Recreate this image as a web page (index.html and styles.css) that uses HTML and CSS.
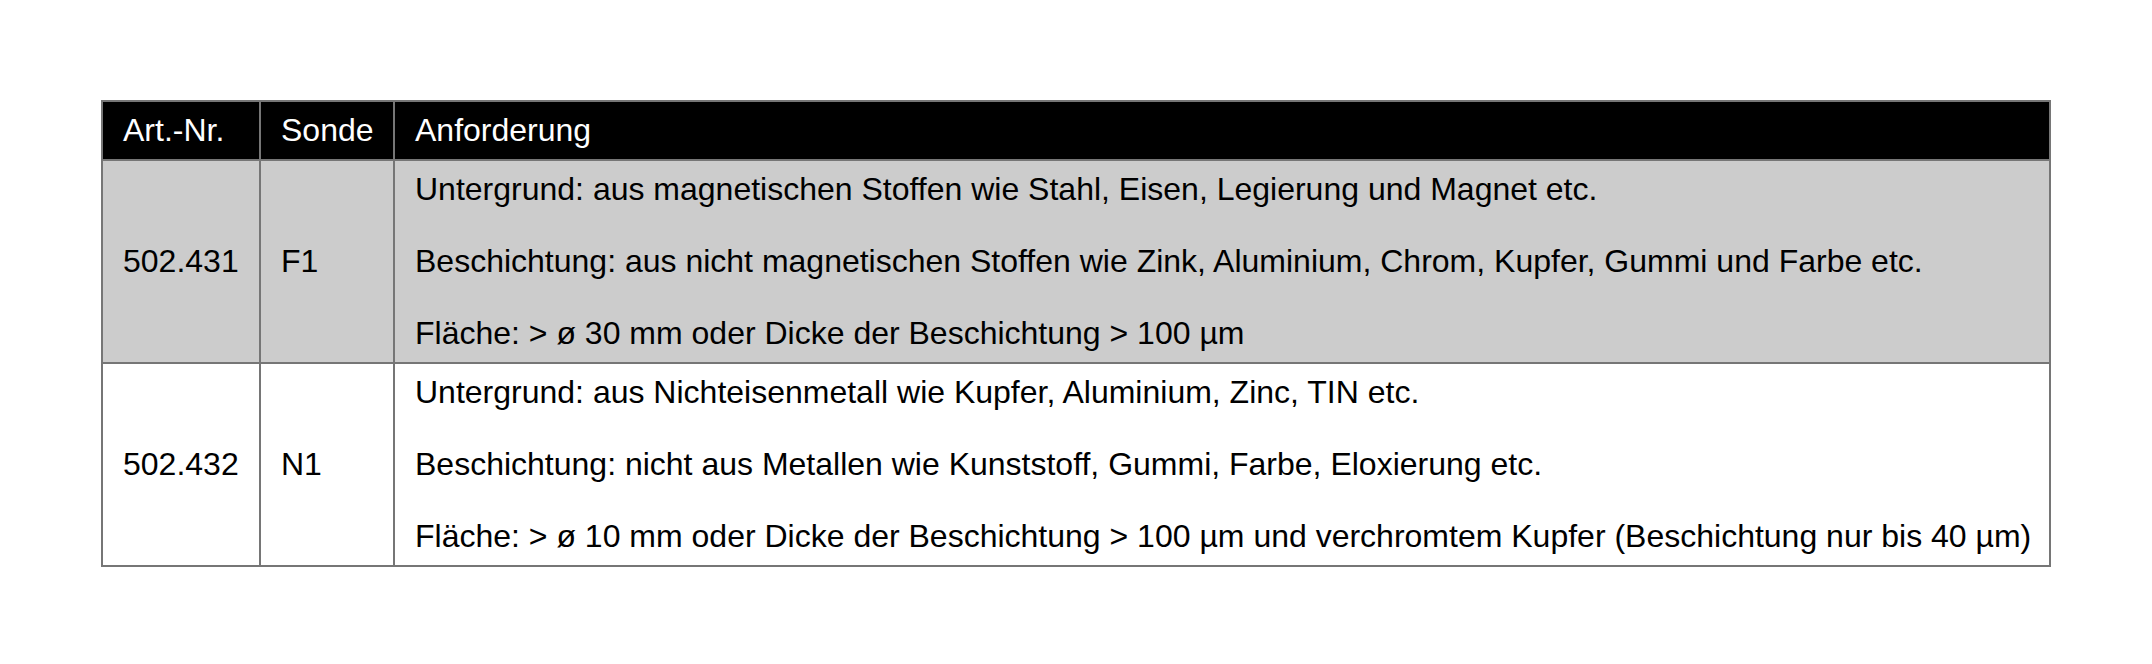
FILE: index.html
```html
<!DOCTYPE html>
<html lang="de">
<head>
<meta charset="utf-8">
<title>Sonden</title>
<link rel="stylesheet" href="styles.css">
</head>
<body>
<div class="page">
  <table class="spec">
    <colgroup>
      <col class="c-art">
      <col class="c-sonde">
      <col class="c-req">
    </colgroup>
    <thead>
      <tr>
        <th>Art.-Nr.</th>
        <th>Sonde</th>
        <th>Anforderung</th>
      </tr>
    </thead>
    <tbody>
      <tr class="shaded">
        <td>502.431</td>
        <td>F1</td>
        <td class="req">
          <p>Untergrund: aus magnetischen Stoffen wie Stahl, Eisen, Legierung und Magnet etc.</p>
          <p>Beschichtung: aus nicht magnetischen Stoffen wie Zink, Aluminium, Chrom, Kupfer, Gummi und Farbe etc.</p>
          <p>Fläche: &gt; ø 30 mm oder Dicke der Beschichtung &gt; 100 µm</p>
        </td>
      </tr>
      <tr>
        <td>502.432</td>
        <td>N1</td>
        <td class="req">
          <p>Untergrund: aus Nichteisenmetall wie Kupfer, Aluminium, Zinc, TIN etc.</p>
          <p>Beschichtung: nicht aus Metallen wie Kunststoff, Gummi, Farbe, Eloxierung etc.</p>
          <p>Fläche: &gt; ø 10 mm oder Dicke der Beschichtung &gt; 100 µm und verchromtem Kupfer (Beschichtung nur bis 40 µm)</p>
        </td>
      </tr>
    </tbody>
  </table>
</div>
</body>
</html>
```

FILE: styles.css
```css
html, body {
  margin: 0;
  padding: 0;
  background: #ffffff;
}

.page {
  padding: 100px 101px 0 101px;
  font-family: "Liberation Sans", Arial, sans-serif;
  font-size: 32px;
  color: #000000;
}

.spec {
  width: 100%;
  border-collapse: collapse;
  table-layout: fixed;
  border: 2px solid #767676;
}

.c-art { width: 158px; }
.c-sonde { width: 134px; }

.spec th,
.spec td {
  border: 2px solid #767676;
  padding: 10px 20px;
  text-align: left;
  vertical-align: middle;
  line-height: 37px;
  font-weight: normal;
}

.spec td.req {
  padding-right: 8px;
}

.spec th {
  background: #000000;
  color: #ffffff;
}

.shaded td {
  background: #cccccc;
}

.req p {
  margin: 0;
  white-space: nowrap;
}

.req p + p {
  margin-top: 35px;
}
```
